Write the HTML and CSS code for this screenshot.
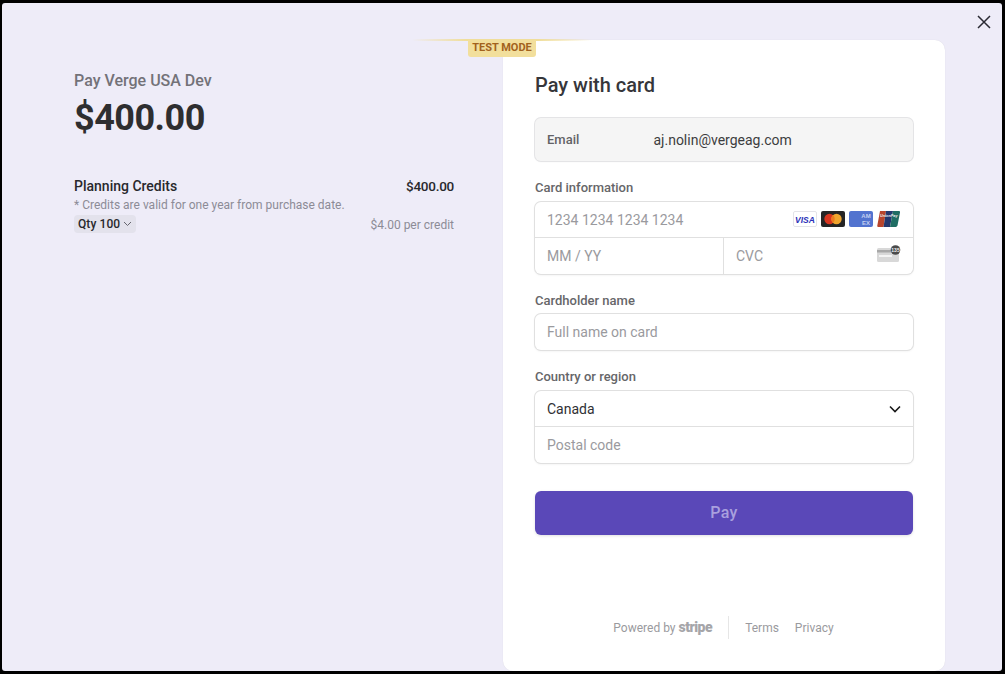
FILE: index.html
```html
<!DOCTYPE html>
<html lang="en">
<head>
<meta charset="utf-8">
<title>Pay Verge USA Dev</title>
<link rel="stylesheet" href="styles.css">
</head>
<body>
<div class="frame">
  <button class="close" aria-label="Close">
    <svg width="14" height="14" viewBox="0 0 14 14"><path d="M1 1l12 12M13 1L1 13" stroke="#2a2a33" stroke-width="1.5" fill="none"/></svg>
  </button>
  <div class="test-line"></div>
  <div class="test-badge">TEST MODE</div>
  <section class="summary">
    <div class="merchant">Pay Verge USA Dev</div>
    <div class="total">$400.00</div>
    <div class="item">
      <div class="item-row">
        <span class="item-name">Planning Credits</span>
        <span class="item-price">$400.00</span>
      </div>
      <div class="item-note">* Credits are valid for one year from purchase date.</div>
      <div class="item-row item-foot">
        <span class="qty">Qty 100
          <svg width="9" height="6" viewBox="0 0 9 6"><path d="M1 1l3.500 3.500L8 1" stroke="#66666f" stroke-width="1" fill="none"/></svg>
        </span>
        <span class="unit">$4.00 per credit</span>
      </div>
    </div>
  </section>
  <main class="card">
    <h1 class="title">Pay with card</h1>
    <div class="email-box">
      <span class="email-label">Email</span>
      <span class="email-value">aj.nolin@vergeag.com</span>
    </div>
    <div class="label">Card information</div>
    <div class="group">
      <div class="cell row-top row-between">
        <span class="ph">1234 1234 1234 1234</span>
        <span class="brands">
          <svg class="brand" width="24" height="16" viewBox="0 0 24 16"><rect x=".5" y=".5" width="23" height="15" rx="1.500" fill="#fff" stroke="#e3e3e8"/><text x="12" y="11.500" text-anchor="middle" class="visa-text">VISA</text></svg>
          <svg class="brand" width="24" height="16" viewBox="0 0 24 16"><rect width="24" height="16" rx="2" fill="#252525"/><circle cx="8.500" cy="8" r="5.200" fill="#d9351f"/><circle cx="15.500" cy="8" r="5.200" fill="#f0a52d"/><path d="M12 4.100a5.200 5.200 0 0 1 0 7.800a5.200 5.200 0 0 1 0-7.800z" fill="#ee7a1f"/></svg>
          <svg class="brand" width="24" height="16" viewBox="0 0 24 16"><rect width="24" height="16" rx="2" fill="#5273cf"/><text x="17" y="7.200" text-anchor="middle" class="amex-text">AM</text><text x="17" y="13.500" text-anchor="middle" class="amex-text">EX</text></svg>
          <svg class="brand" width="24" height="16" viewBox="0 0 24 16"><path d="M3 0h6L6.500 16H1.500a1.200 1.200 0 0 1-1.200-1.500z" fill="#b8452c"/><path d="M9 0h7l-3 16H6.500z" fill="#23386e"/><path d="M16 0h5.800a1.200 1.200 0 0 1 1.200 1.500L20.500 14.500a2 2 0 0 1-2 1.500H13z" fill="#1f6d63"/><text x="3" y="6" class="up-text">UnionPay</text></svg>
        </span>
      </div>
      <div class="split">
        <div class="cell half"><span class="ph">MM / YY</span></div>
        <div class="cell half row-between">
          <span class="ph">CVC</span>
          <svg class="cvc-icon" width="24" height="18" viewBox="0 0 24 18"><rect x="0" y="3" width="22" height="14" rx="1.500" fill="#d8d8d8"/><rect x="0" y="5" width="22" height="2.500" fill="#a8a8a8"/><rect x="2" y="10" width="13" height="2" fill="#f4f4f4"/><circle cx="18.500" cy="5" r="4.800" fill="#4a4a4a"/><text x="18.500" y="6.800" text-anchor="middle" class="cvc-text">135</text></svg>
        </div>
      </div>
    </div>
    <div class="label">Cardholder name</div>
    <div class="group">
      <div class="cell"><span class="ph">Full name on card</span></div>
    </div>
    <div class="label">Country or region</div>
    <div class="group">
      <div class="cell row-top row-between">
        <span class="value">Canada</span>
        <svg class="chev" width="12" height="8" viewBox="0 0 12 8"><path d="M1 1.500l5 5 5-5" stroke="#1a1a1a" stroke-width="1.600" fill="none"/></svg>
      </div>
      <div class="cell row-bottom"><span class="ph">Postal code</span></div>
    </div>
    <button class="pay">Pay</button>
    <footer class="foot">
      <span class="powered">Powered by <b class="stripe">stripe</b></span>
      <span class="links"><span>Terms</span><span>Privacy</span></span>
    </footer>
  </main>
</div>
</body>
</html>
```

FILE: styles.css
```css
* { box-sizing: border-box; }
html, body { margin: 0; height: 100%; background: #000; overflow: hidden; }
body { padding: 3px 3px 3px 2px; }
.frame {
  position: relative;
  height: 668px;
  background: #eeecf8;
  border-radius: 3px;
  display: flex;
  align-items: flex-start;
  padding-top: 37px;
  font-family: Roboto, "Liberation Sans", sans-serif;
}
.close {
  position: absolute;
  top: 12px;
  right: 11px;
  width: 14px;
  height: 14px;
  padding: 0;
  border: 0;
  background: none;
  display: flex;
}
.test-line {
  position: absolute;
  left: 410px;
  top: 36px;
  width: 180px;
  height: 2px;
  background: linear-gradient(90deg, rgba(240,222,155,0), #f0de9b 30%, #f0de9b 70%, rgba(240,222,155,0));
}
.test-badge {
  position: absolute;
  left: 466px;
  top: 37px;
  width: 68px;
  height: 17px;
  background: #f2df9c;
  color: #a2621d;
  border-radius: 0 0 3px 3px;
  font-size: 11px;
  font-weight: 700;
  line-height: 15px;
  text-align: center;
}
.summary {
  width: 380px;
  margin-left: 72px;
  margin-right: 49px;
  padding-top: 33px;
}
.merchant { font-size: 16px; font-weight: 500; line-height: 16px; color: #737278; }
.total { margin-top: 9px; font-size: 36px; font-weight: 700; line-height: 40px; letter-spacing: -0.5px; color: #2e2e30; }
.item { margin-top: 40px; }
.item-row { display: flex; justify-content: space-between; align-items: center; }
.item-name { font-size: 14px; font-weight: 500; line-height: 16px; color: #28282d; }
.item-price { font-size: 13.500px; font-weight: 500; line-height: 16px; color: #28282d; letter-spacing: -0.25px; }
.item-note { margin-top: 4px; font-size: 12px; line-height: 14px; color: #8c8b96; }
.item-foot { margin-top: 3px; }
.qty {
  display: inline-flex;
  align-items: center;
  gap: 3px;
  height: 18px;
  padding: 0 4px 1px;
  background: #e3e2ec;
  border-radius: 4px;
  font-size: 12px;
  font-weight: 500;
  letter-spacing: .1px;
  color: #28282d;
}
.unit { margin-top: 2px; font-size: 12px; color: #8c8b96; }
.card {
  width: 442px;
  height: 631px;
  background: #fff;
  border-radius: 10px;
  box-shadow: 0 0 1px rgba(0,0,0,.12);
  padding: 32px 32px 0;
  display: flex;
  flex-direction: column;
}
.title { margin: 0; font-size: 20px; font-weight: 500; line-height: 26px; color: #36363a; }
.email-box {
  margin-top: 20px;
  height: 43px;
  display: flex;
  align-items: center;
  padding: 0 12px;
  background: #f5f5f5;
  border-radius: 6px;
  box-shadow: 0 0 0 1px #e4e4e6, 0 1px 2px rgba(0,0,0,.06);
}
.email-label { width: 106.500px; font-size: 13px; font-weight: 500; color: #626266; }
.email-value { font-size: 14px; color: #3d3d40; }
.label { margin-top: 19px; margin-bottom: 6.500px; font-size: 13px; font-weight: 500; line-height: 15px; color: #666669; }
.group {
  border-radius: 6px;
  background: #fff;
  box-shadow: 0 0 0 1px #e0e0e0, 0 1px 3px rgba(0,0,0,.08);
  overflow: hidden;
}
.cell { height: 36px; display: flex; align-items: center; padding: 0 12px; font-size: 14px; }
.row-top { height: 35.500px; padding-top: 1px; }
.row-bottom { height: 36.500px; border-top: 1px solid #e0e0e0; }
.split { display: flex; height: 36.500px; border-top: 1px solid #e0e0e0; }
.half { flex: 1 1 0; height: 35.500px; }
.half:first-child { flex: 0 0 188px; }
.half + .half { border-left: 1px solid #e0e0e0; }
.row-between { justify-content: space-between; }
.ph { color: #9a9a9e; }
.value { color: #303034; }
.brands { display: flex; gap: 4px; margin-top: -1px; }
.brand { display: block; }
.visa-text { font: italic 800 8.500px "Liberation Sans", sans-serif; fill: #2a2fb8; }
.amex-text { font: 700 6px "Liberation Sans", sans-serif; fill: #c4d0f0; }
.up-text { font: italic 700 3.800px "Liberation Sans", sans-serif; fill: #f0f0f0; }
.cvc-text { font: 700 5px "Liberation Sans", sans-serif; fill: #f0f0f0; }
.cvc-icon { display: block; margin-top: -4px; }
.chev { display: block; }
.pay {
  margin-top: 28px;
  height: 44px;
  border: 0;
  border-radius: 6px;
  background: #5a48b8;
  color: #a9a0de;
  font: 500 16px Roboto, sans-serif;
  letter-spacing: .3px;
  box-shadow: 0 1px 3px rgba(0,0,0,.12);
}
.foot {
  margin-top: 82px;
  height: 22px;
  display: flex;
  justify-content: center;
  align-items: center;
  font-size: 12px;
  color: #9a9a9e;
  margin-left: -1px;
}
.powered { padding-right: 16px; border-right: 1px solid #e6e6e6; line-height: 22px; }
.stripe { font-size: 14px; font-weight: 900; letter-spacing: -0.5px; color: #a5a5a9; }
.links { display: flex; gap: 16px; padding-left: 16px; }
```
